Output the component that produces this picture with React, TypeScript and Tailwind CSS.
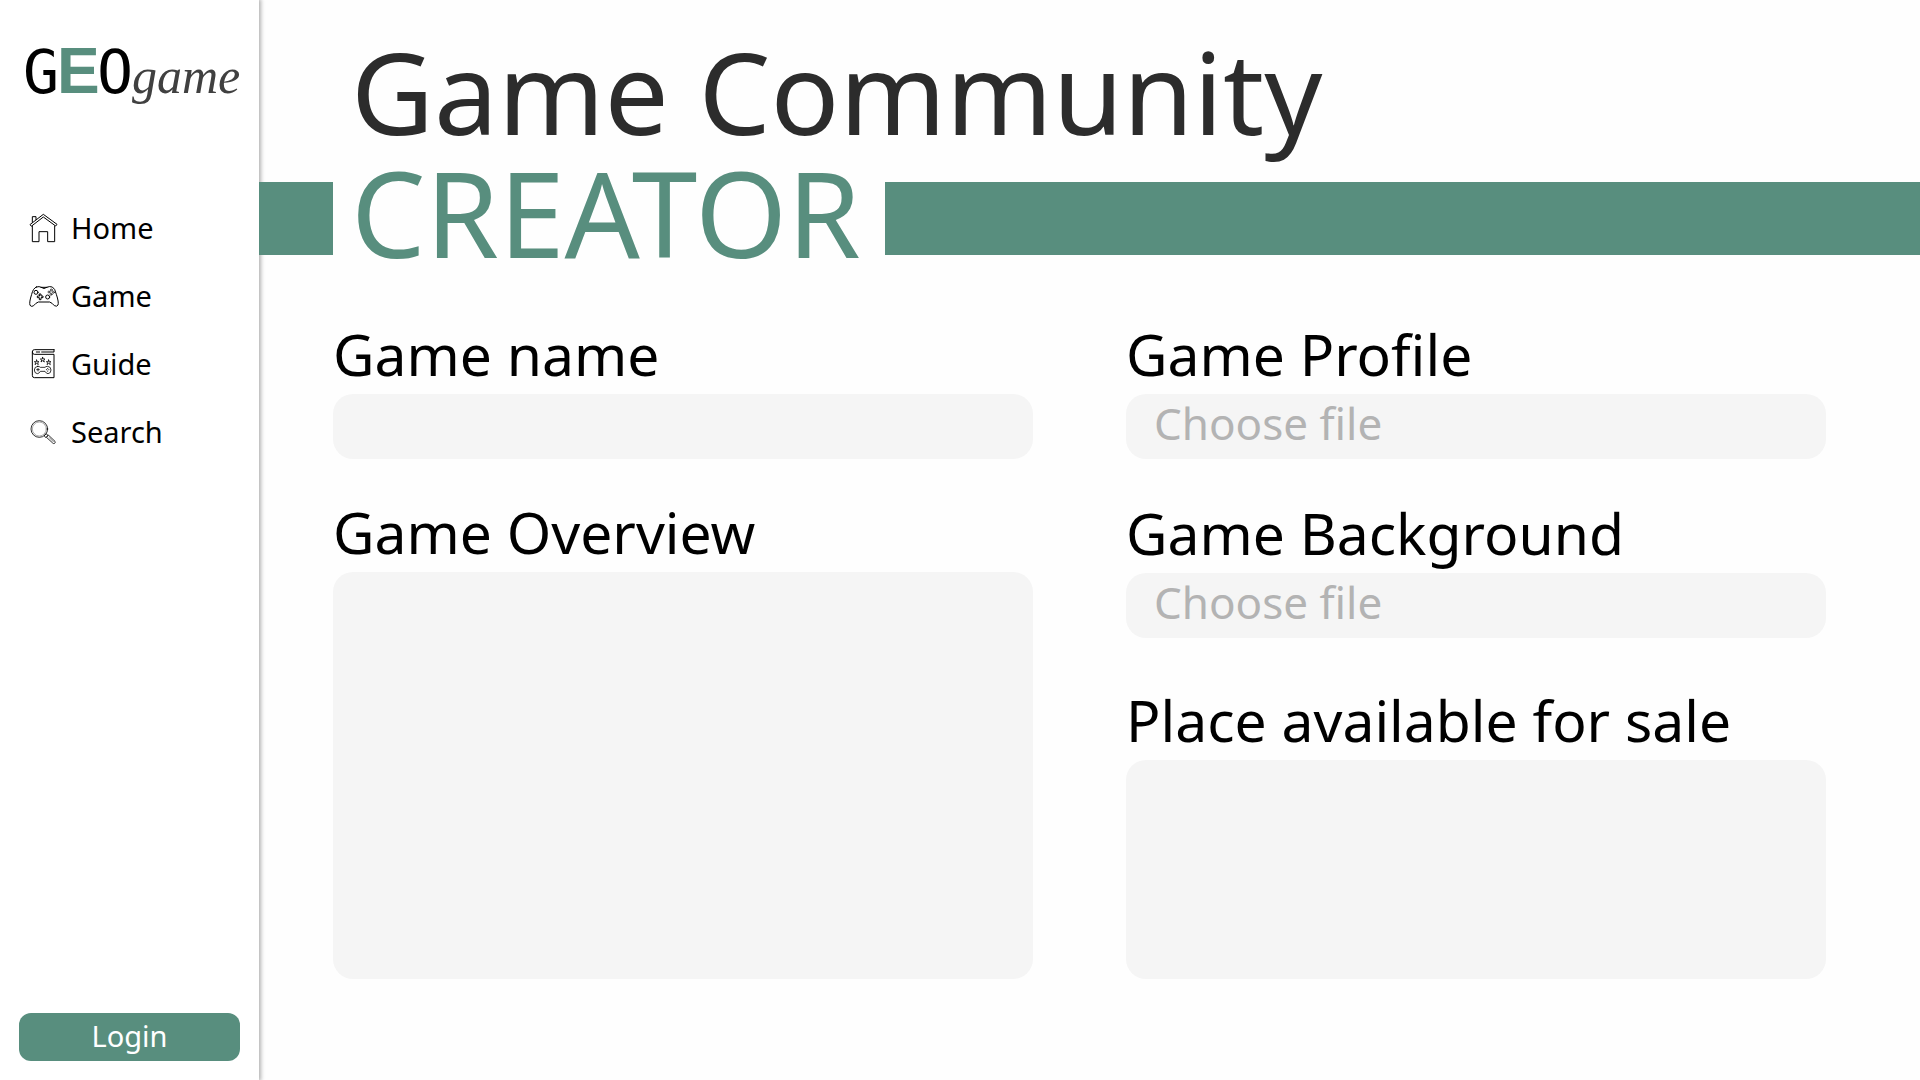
import type { ReactNode } from "react";

function Logo() {
  return (
    <svg viewBox="0 0 220 96" className="h-24 w-[220px]" role="img" aria-label="GEOgame">
      <text x="0" y="57" fontSize="60" fill="#000" style={{ fontFamily: '"DejaVu Sans Mono", monospace' }}>G</text>
      <text x="34" y="57" fontSize="64" fontWeight="700" fill="#588e7e" style={{ fontFamily: '"Liberation Sans", sans-serif' }}>E</text>
      <text x="74" y="57" fontSize="60" fill="#000" style={{ fontFamily: '"DejaVu Sans Mono", monospace' }}>O</text>
      <text x="109" y="57" fontSize="50" fontStyle="italic" fill="#404040" style={{ fontFamily: '"Liberation Serif", serif' }}>game</text>
    </svg>
  );
}

function Icon({ children }: { children: ReactNode }) {
  return (
    <svg
      viewBox="0 0 90 90"
      className="size-[30px] shrink-0"
      fill="none"
      stroke="#000"
      strokeWidth="3"
      strokeLinejoin="round"
      strokeLinecap="round"
      aria-hidden="true"
    >
      {children}
    </svg>
  );
}

const HomeIcon = () => (
  <Icon>
    <path d="M4 34 43 4l41 30-4 5L43 12 8 39Z" />
    <path d="M10 39v47h20V56h26v30h21V39M10 28V11h11v9" />
  </Icon>
);

const GameIcon = () => (
  <Icon>
    <path d="M22 18q10-3 14 1h18q6-4 16-1 8 4 12 22 8 24 5 32-3 6-11 2-6-8-14-11H28q-8 3-14 11-6 5-11-1-3-9 5-33 4-18 14-22Z" />
    <path d="M36 19q9 8 18 0" />
    <circle cx="21" cy="34" r="6" />
    <circle cx="56" cy="48" r="6" />
    <path d="M31 39h5v6h6v5h-6v6h-5v-6h-6v-5h6Z" />
    <g strokeWidth="2">
      <circle cx="67" cy="27" r="3" />
      <circle cx="60" cy="33" r="3" />
      <circle cx="73" cy="34" r="3" />
      <circle cx="66" cy="40" r="3" />
    </g>
  </Icon>
);

const star = "m0-7 2 5 5 0-4 3 2 6-5-4-5 4 2-6-4-3 5 0Z";

const GuideIcon = () => (
  <Icon>
    <path d="M75 2H16q-6 0-6 7v70q0 7 6 7h59V16H16q-6 0-6-7M75 2v6M22 9h10M38 9h36" />
    <g strokeWidth="2.4">
      <path d={"M23 40" + star} />
      <path d={"M41 32" + star} />
      <path d={"M59 40" + star} />
      <path d="M26 52q6 0 8 3h14q2-3 8-3 10 1 10 11t-9 11q-5 0-9-7H34q-4 7-9 7-9-1-9-11t10-11Z" />
      <path d="M27 58v8M23 62h8M52 62h1M59 62h1M56 58v1M56 66v1" />
    </g>
  </Icon>
);

const SearchIcon = () => (
  <Icon>
    <g strokeWidth="2.4">
      <circle cx="31" cy="36" r="25" />
      <circle cx="31" cy="36" r="21" strokeWidth="1" />
      <path d="m46 56 5-6 6 5-5 6ZM53 60l5-6 20 19q2 3-1 6-3 2-5 0Z" />
      <path d="m61 62 12 12" strokeWidth="1.5" />
    </g>
  </Icon>
);

const navItems = [
  { label: "Home", icon: <HomeIcon /> },
  { label: "Game", icon: <GameIcon /> },
  { label: "Guide", icon: <GuideIcon /> },
  { label: "Search", icon: <SearchIcon /> },
];

function Sidebar() {
  return (
    <aside className="flex w-[259px] shrink-0 flex-col bg-white px-[19px] pt-9 pb-[19px] shadow-[1px_0_4px_1px_rgba(0,0,0,0.3)]">
      <a href="#home" className="ml-1 w-[220px]">
        <Logo />
      </a>
      <nav className="mt-[82px] ml-[10px] flex flex-col gap-10">
        {navItems.map((item) => (
          <a
            key={item.label}
            href={"#" + item.label.toLowerCase()}
            className="flex h-7 items-center gap-3 text-[29px] leading-7 text-black"
          >
            {item.icon}
            {item.label}
          </a>
        ))}
      </nav>
      <button type="button" className="mt-auto h-12 rounded-xl bg-[#588e7e] pb-1 text-[29px] leading-none text-white">
        Login
      </button>
    </aside>
  );
}

const labelClass = "mb-2 block text-[57px] leading-[64px] whitespace-nowrap text-black";
const boxClass = "block w-full rounded-[20px] bg-[#f5f5f5] px-7 text-[44px] outline-none";

function FileField({ id, label }: { id: string; label: string }) {
  return (
    <div>
      <label htmlFor={id} className={labelClass}>
        {label}
      </label>
      <label className="relative flex h-[65px] w-full cursor-pointer items-center rounded-[20px] bg-[#f5f5f5] px-7 pb-2 text-[44px] leading-none text-[#b3b3b3]">
        Choose file
        <input id={id} type="file" className="sr-only" />
      </label>
    </div>
  );
}

export default function App() {
  return (
    <div className="flex min-h-screen bg-[#fefefe] font-['Noto_Sans',sans-serif]">
      <Sidebar />
      <main className="flex min-w-0 flex-1 flex-col pt-[30px]">
        <h1 className="text-[114px] leading-[122px] whitespace-nowrap text-[#2c2c2c]">
          <span className="block pl-[92px]">Game Community</span>
          <span className="flex items-start text-[#588e7e]">
            <span className="mt-[30px] h-[73px] w-[74px] shrink-0 bg-[#588e7e]" />
            <span className="w-[552px] shrink-0 pl-[18px] text-[118px]">CREATOR</span>
            <span className="mt-[30px] h-[73px] flex-1 bg-[#588e7e]" />
          </span>
        </h1>
        <form className="mt-12 grid flex-1 grid-cols-2 gap-x-[93px] pr-[94px] pb-[101px] pl-[74px]">
          <div className="flex flex-col gap-[41px]">
            <div>
              <label htmlFor="game-name" className={labelClass}>
                Game name
              </label>
              <input id="game-name" type="text" className={boxClass + " h-[65px]"} />
            </div>
            <div className="flex flex-1 flex-col">
              <label htmlFor="game-overview" className={labelClass}>
                Game Overview
              </label>
              <textarea id="game-overview" className={boxClass + " flex-1 resize-none"} />
            </div>
          </div>
          <div className="flex flex-col">
            <FileField id="game-profile" label="Game Profile" />
            <div className="mt-[42px]">
              <FileField id="game-background" label="Game Background" />
            </div>
            <div className="mt-[50px] flex flex-1 flex-col">
              <label htmlFor="sale-places" className={labelClass}>
                Place available for sale
              </label>
              <textarea id="sale-places" className={boxClass + " flex-1 resize-none"} />
            </div>
          </div>
        </form>
      </main>
    </div>
  );
}
